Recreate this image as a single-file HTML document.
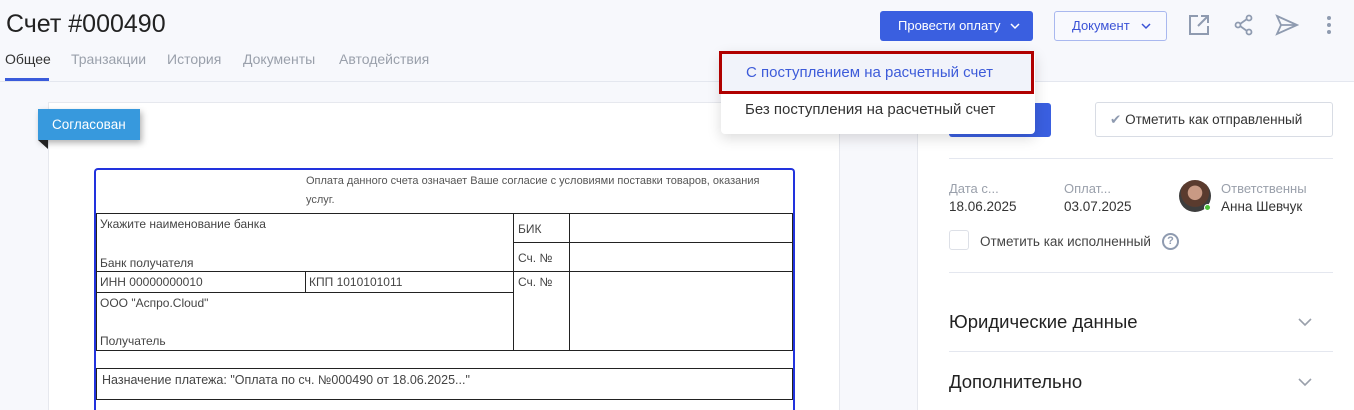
<!DOCTYPE html>
<html><head><meta charset="utf-8"><style>
*{box-sizing:border-box;margin:0;padding:0}
html,body{width:1354px;height:410px;overflow:hidden}
body{background:#f7f8fc;font-family:"Liberation Sans",sans-serif;position:relative;color:#333}
.a{position:absolute}
.inv{font-size:12px;color:#444}
.inv div{position:absolute}
.b{border:1px solid #222}
</style></head><body>
<div class="a" style="left:6px;top:10px;font-size:25px;color:#222">Счет #000490</div>
<div class="a" style="left:5px;top:51px;font-size:14px;color:#333">Общее</div>
<div class="a" style="left:71px;top:51px;font-size:14px;color:#9aa0ab">Транзакции</div>
<div class="a" style="left:167px;top:51px;font-size:14px;color:#9aa0ab">История</div>
<div class="a" style="left:243px;top:51px;font-size:14px;color:#9aa0ab">Документы</div>
<div class="a" style="left:339px;top:51px;font-size:14px;color:#9aa0ab">Автодействия</div>
<div class="a" style="left:5px;top:78px;width:44px;height:3px;background:#3a5bdb"></div>
<div class="a" style="left:0;top:81px;width:1354px;height:1px;background:#e4e7ef"></div>

<div class="a" style="left:880px;top:11px;width:153px;height:30px;background:#3a5fe0;border-radius:3px;color:#fff;font-size:13px;line-height:30px;padding-left:18px">Провести оплату</div>
<svg class="a" style="left:1010px;top:23px" width="10" height="7"><path d="M1 1l4 4 4-4" fill="none" stroke="#fff" stroke-width="1.5"/></svg>
<div class="a" style="left:1054px;top:11px;width:113px;height:30px;border:1px solid #a9b8ef;border-radius:3px;color:#3a52d6;font-size:13px;line-height:28px;padding-left:17px;background:#f8f9fe">Документ</div>
<svg class="a" style="left:1141px;top:23px" width="10" height="7"><path d="M1 1l4 4 4-4" fill="none" stroke="#3a52d6" stroke-width="1.5"/></svg>
<svg class="a" style="left:1188px;top:14px" width="22" height="22" viewBox="0 0 22 22" fill="none" stroke="#8f9bb0" stroke-width="2"><path d="M10 2H2v18h18v-8M13 2h7v7M20 2L10 12"/></svg>
<svg class="a" style="left:1233px;top:14px" width="22" height="22" viewBox="0 0 22 22" fill="none" stroke="#8f9bb0" stroke-width="1.8"><circle cx="16" cy="4" r="2.5"/><circle cx="5" cy="11" r="2.5"/><circle cx="16" cy="18" r="2.5"/><path d="M7 10l7-5M7 12l7 5"/></svg>
<svg class="a" style="left:1275px;top:14px" width="24" height="22" viewBox="0 0 24 22" fill="none" stroke="#8f9bb0" stroke-width="1.8"><path d="M2 2l20 9-20 9 4-9zM6 11h16"/></svg>
<svg class="a" style="left:1326px;top:15px" width="6" height="20"><circle cx="3" cy="3" r="2" fill="#8f9bb0"/><circle cx="3" cy="10" r="2" fill="#8f9bb0"/><circle cx="3" cy="17" r="2" fill="#8f9bb0"/></svg>

<div class="a" style="left:48px;top:102px;width:792px;height:308px;background:#fff;border:1px solid #e6e8ee;border-bottom:none"></div>
<div class="a" style="left:917px;top:82px;width:437px;height:328px;background:#fff;border-left:1px solid #e6e8ee"></div>

<div class="a" style="left:38px;top:109px;width:102px;height:31px;background:#3799dd;color:#fff;font-size:13.5px;line-height:31px;padding-left:14px;box-shadow:2px 3px 6px rgba(0,0,0,.3)">Согласован</div>
<div class="a" style="left:38px;top:140px;width:0;height:0;border-top:9px solid #222;border-left:10px solid transparent"></div>

<div class="a inv" style="left:94px;top:168px;width:701px;height:242px;border:2px solid #2233dd;border-bottom:none;border-radius:4px 4px 0 0">
<div style="left:210px;top:2px;width:470px;font-size:11px;line-height:19px;color:#555">Оплата данного счета означает Ваше согласие с условиями поставки товаров, оказания услуг.</div>
<div class="b" style="left:0;top:43px;width:418px;height:138px"></div>
<div class="b" style="left:417px;top:43px;width:57px;height:30px"></div>
<div class="b" style="left:473px;top:43px;width:224px;height:30px"></div>
<div class="b" style="left:417px;top:72px;width:57px;height:30px"></div>
<div class="b" style="left:473px;top:72px;width:224px;height:30px"></div>
<div class="b" style="left:417px;top:101px;width:57px;height:80px"></div>
<div class="b" style="left:473px;top:101px;width:224px;height:80px"></div>
<div class="b" style="left:0;top:101px;width:210px;height:22px"></div>
<div class="b" style="left:209px;top:101px;width:209px;height:22px"></div>
<div class="b" style="left:0;top:198px;width:697px;height:32px"></div>
<div style="left:4px;top:47px">Укажите наименование банка</div>
<div style="left:4px;top:86px">Банк получателя</div>
<div style="left:422px;top:52px">БИК</div>
<div style="left:422px;top:81px">Сч. №</div>
<div style="left:422px;top:105px">Сч. №</div>
<div style="left:4px;top:105px">ИНН 00000000010</div>
<div style="left:213px;top:105px">КПП 1010101011</div>
<div style="left:4px;top:126px">ООО "Аспро.Cloud"</div>
<div style="left:4px;top:164px">Получатель</div>
<div style="left:6px;top:203px;font-size:12.5px">Назначение платежа: "Оплата по сч. №000490 от 18.06.2025..."</div>
</div>

<div class="a" style="left:949px;top:103px;width:102px;height:34px;background:#3a5fe0;border-radius:3px"></div>
<div class="a" style="left:1095px;top:102px;width:238px;height:35px;border:1px solid #d8dce4;border-radius:3px;font-size:13.5px;line-height:33px;padding-left:14px;color:#333"><span style="color:#8f9bb0">&#10004;</span> Отметить как отправленный</div>
<div class="a" style="left:949px;top:158px;width:384px;height:1px;background:#e4e7ef"></div>
<div class="a" style="left:949px;top:181px;font-size:13px;color:#9aa0ab">Дата с...</div>
<div class="a" style="left:949px;top:199px;font-size:13.5px;color:#333">18.06.2025</div>
<div class="a" style="left:1064px;top:181px;font-size:13px;color:#9aa0ab">Оплат...</div>
<div class="a" style="left:1064px;top:199px;font-size:13.5px;color:#333">03.07.2025</div>
<div class="a" style="left:1179px;top:180px;width:32px;height:32px;border-radius:50%;background:radial-gradient(circle at 50% 40%,#c99a84 0 28%,#5a3b2e 30% 55%,#3d3d3d 58%)"></div>
<div class="a" style="left:1204px;top:204px;width:7px;height:7px;border-radius:50%;background:#4cc23a;border:1px solid #fff"></div>
<div class="a" style="left:1221px;top:181px;width:85px;overflow:hidden;white-space:nowrap;font-size:13px;color:#9aa0ab">Ответственный</div>
<div class="a" style="left:1221px;top:199px;font-size:13.5px;color:#333">Анна Шевчук</div>
<div class="a" style="left:949px;top:230px;width:20px;height:20px;border:1px solid #dde0e7;border-radius:3px"></div>
<div class="a" style="left:980px;top:234px;font-size:13.5px;color:#444">Отметить как исполненный</div>
<div class="a" style="left:1162px;top:233px;width:17px;height:17px;border:2px solid #8f9bb0;border-radius:50%;font-size:11px;line-height:13px;text-align:center;color:#8f9bb0;font-weight:bold">?</div>
<div class="a" style="left:949px;top:272px;width:384px;height:1px;background:#e4e7ef"></div>
<div class="a" style="left:949px;top:311px;font-size:18.5px;color:#222">Юридические данные</div>
<svg class="a" style="left:1298px;top:318px" width="14" height="9"><path d="M1 1l6 6 6-6" fill="none" stroke="#9aa0ab" stroke-width="1.6"/></svg>
<div class="a" style="left:949px;top:351px;width:384px;height:1px;background:#e4e7ef"></div>
<div class="a" style="left:949px;top:371px;font-size:18.5px;color:#222">Дополнительно</div>
<svg class="a" style="left:1298px;top:378px" width="14" height="9"><path d="M1 1l6 6 6-6" fill="none" stroke="#9aa0ab" stroke-width="1.6"/></svg>

<div class="a" style="left:721px;top:52px;width:314px;height:82px;background:#fff;border-radius:4px;box-shadow:0 4px 14px rgba(0,0,0,.15)"></div>
<div class="a" style="left:719px;top:51px;width:315px;height:43px;background:#f1f3fa;border:3px solid #b00000;color:#3d5bd9;font-size:15px;line-height:37px;padding-left:24px">С поступлением на расчетный счет</div>
<div class="a" style="left:745px;top:101px;font-size:15px;color:#333">Без поступления на расчетный счет</div>
</body></html>
